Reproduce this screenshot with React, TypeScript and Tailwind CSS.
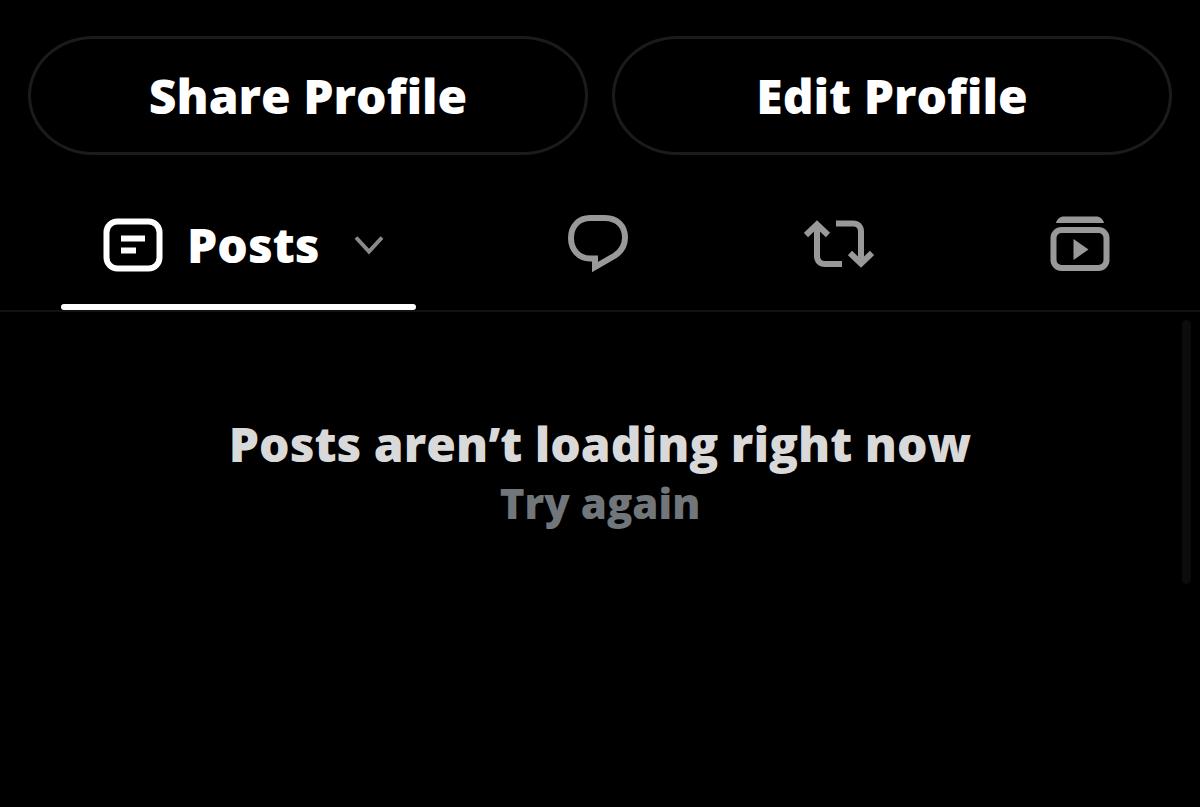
import type { ReactNode } from 'react'

function PostsIcon() {
  return (
    <svg width="60" height="54" viewBox="0 0 60 54" fill="none" stroke="currentColor" strokeWidth="6" aria-hidden="true">
      <rect x="3.5" y="3.5" width="53" height="47" rx="11" />
      <path d="M18 20.5h24M18 32.5h15" />
    </svg>
  )
}

function ChevronIcon() {
  return (
    <svg className="text-[#8a8a8a]" width="30" height="20" viewBox="0 0 30 20" fill="none" stroke="currentColor" strokeWidth="4" aria-hidden="true">
      <path d="M2 2.5l13 14 13-14" />
    </svg>
  )
}

function ReplyIcon() {
  return (
    <svg width="62" height="60" viewBox="0 0 62 60" fill="none" stroke="currentColor" strokeWidth="6" aria-hidden="true">
      <path d="M23 4h15C50 4 58 12 58 23.500c0 8-4 14-10 18L28 53V44.500H23C12 44.500 4 36 4 24S12 4 23 4z" />
    </svg>
  )
}

function RepostIcon() {
  return (
    <svg width="70" height="48" viewBox="0 0 70 48" fill="none" stroke="currentColor" strokeWidth="6" aria-hidden="true">
      <path d="M2 15L13 4.500l11 10.500M13 5v31c0 5 3 8 8 8h17" />
      <path d="M32 3.500h17c5 0 8 3 8 8v31M46 33l11 10.500L68 33" />
    </svg>
  )
}

function VideosIcon() {
  return (
    <svg width="60" height="56" viewBox="0 0 60 56" fill="none" aria-hidden="true">
      <path d="M6 7c1-4 4-6.500 8-6.500h32c4 0 7 2.500 8 6.500z" fill="currentColor" />
      <rect x="3.500" y="14" width="53" height="38" rx="8" stroke="currentColor" strokeWidth="6" />
      <path d="M23.500 23v21L38.500 33.500z" fill="currentColor" />
    </svg>
  )
}

const tabs: { label: string; icon: ReactNode }[] = [
  { label: 'Replies', icon: <ReplyIcon /> },
  { label: 'Reposts', icon: <RepostIcon /> },
  { label: 'Videos', icon: <VideosIcon /> },
]

export default function App() {
  return (
    <main className="relative min-h-screen bg-black font-['Open_Sans',sans-serif] font-extrabold text-white">
      {/* Profile actions */}
      <div className="grid grid-cols-2 gap-6 px-7 pt-9">
        {['Share Profile', 'Edit Profile'].map((label) => (
          <button
            key={label}
            type="button"
            className="h-[119px] rounded-[66px/60px] border-3 border-[#1b1b1b] text-5xl"
          >
            {label}
          </button>
        ))}
      </div>

      {/* Tabs */}
      <nav role="tablist" className="grid h-[157px] grid-cols-[477fr_241fr_241fr_241fr] border-b-2 border-[#121212] text-[#999999]">
        <button type="button" role="tab" aria-selected="true" className="flex flex-col items-center justify-between pt-[50px] text-white">
          <span className="flex h-20 w-[355px] items-center gap-6 pr-8 pl-[42px]">
            <PostsIcon />
            <span className="flex-1 text-left text-5xl">Posts</span>
            <ChevronIcon />
          </span>
          <span className="h-1.5 w-[355px] rounded-full bg-white" />
        </button>
        {tabs.map((tab) => (
          <button key={tab.label} type="button" role="tab" aria-selected="false" aria-label={tab.label} className="flex items-center justify-center pt-[22px]">
            {tab.icon}
          </button>
        ))}
      </nav>

      {/* Error state */}
      <section className="flex flex-col items-center px-6 pt-[100px] text-center">
        <h2 className="text-5xl leading-[64px] text-[#d9d9d9]">Posts aren’t loading right now</h2>
        <button type="button" className="text-[42px] leading-[54px] text-[#71767b]">Try again</button>
      </section>

      {/* Scroll indicator */}
      <div className="absolute top-80 right-[9px] h-[264px] w-[9px] rounded-full bg-[#0c0c0c]" />
    </main>
  )
}
